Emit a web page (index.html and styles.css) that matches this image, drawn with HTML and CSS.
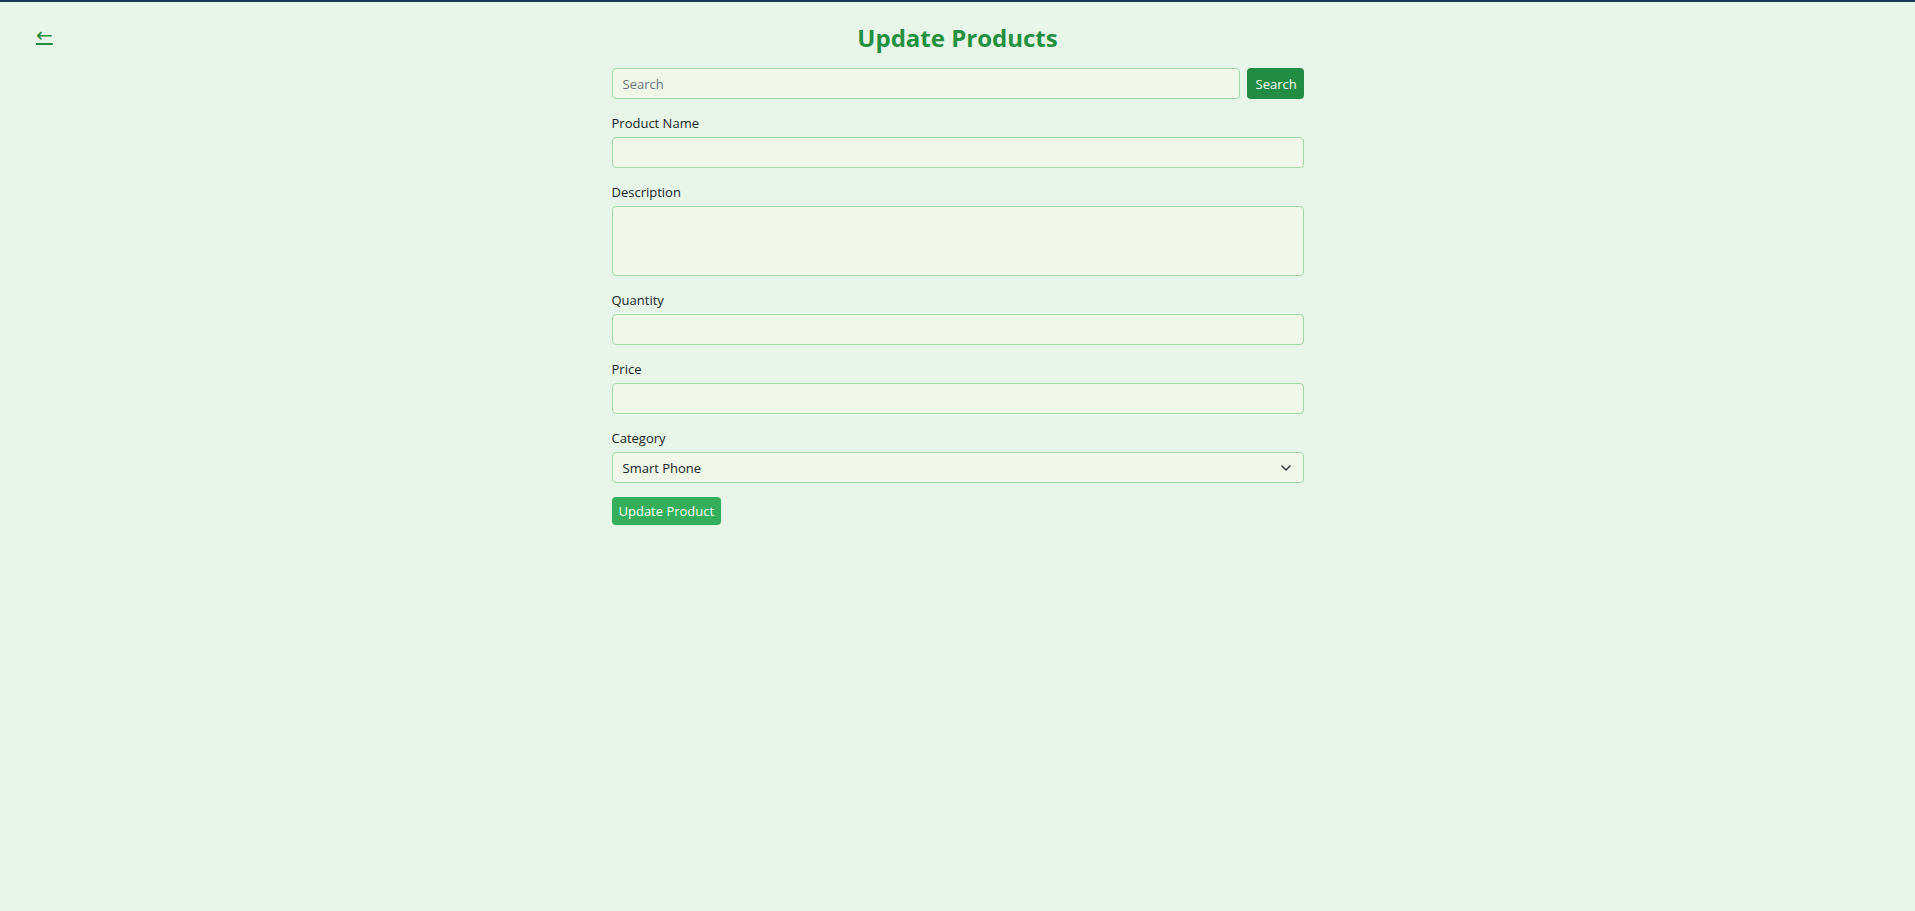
FILE: index.html
```html
<!DOCTYPE html>
<html lang="en">
<head>
<meta charset="utf-8">
<title>Update Products</title>
<link rel="stylesheet" href="styles.css">
</head>
<body>
<header class="top">
  <a class="back" href="#">&larr;</a>
  <h1 class="title">Update Products</h1>
  <span class="spacer"></span>
</header>
<main class="form-wrap">
  <div class="search-row">
    <input class="field" type="text" placeholder="Search">
    <button class="btn btn-dark" type="button">Search</button>
  </div>
  <div class="group">
    <label class="label">Product Name</label>
    <input class="field" type="text">
  </div>
  <div class="group">
    <label class="label">Description</label>
    <textarea class="field area"></textarea>
  </div>
  <div class="group">
    <label class="label">Quantity</label>
    <input class="field" type="text">
  </div>
  <div class="group">
    <label class="label">Price</label>
    <input class="field" type="text">
  </div>
  <div class="group">
    <label class="label">Category</label>
    <div class="select">
      <span class="select-text">Smart Phone</span>
      <svg class="chev" width="10" height="6" viewBox="0 0 10 6"><path d="M1 1l4 4 4-4" fill="none" stroke="#343a40" stroke-width="1.5" stroke-linecap="round" stroke-linejoin="round"/></svg>
    </div>
  </div>
  <div>
    <button class="btn btn-light" type="button">Update Product</button>
  </div>
</main>
</body>
</html>
```
FILE: styles.css
```css
* { box-sizing: border-box; }
html, body { height: 100%; }
body {
  margin: 0;
  background: #e8f5e9;
  border-top: 2px solid #1b3a57;
  font-family: "Open Sans", "Noto Sans", sans-serif;
  color: #212529;
}
.top {
  display: grid;
  grid-template-columns: 1fr auto 1fr;
  align-items: start;
  padding: 0 36px;
}
.back {
  color: #1e8e3e;
  font-size: 20px;
  line-height: 1;
  margin-top: 23px;
  justify-self: start;
  font-family: "DejaVu Sans", sans-serif;
}
.title {
  margin: 19px 0 0;
  font-size: 24px;
  line-height: 33px;
  font-weight: 700;
  color: #22903f;
}
.form-wrap {
  width: 692px;
  margin: 14px auto 0;
}
.search-row {
  display: flex;
  gap: 7px;
  margin-bottom: 14px;
}
.search-row .field { flex: 1; }
.group { margin-bottom: 14px; display: flex; flex-direction: column; }
.label {
  font-size: 13px;
  line-height: 20px;
  margin-bottom: 4px;
}
.field {
  height: 31px;
  width: 100%;
  padding: 4px 10px;
  border: 1px solid #a3d9a9;
  border-radius: 4px;
  background: #f1f8e9;
  font-family: inherit;
  font-size: 13px;
  color: #212529;
  outline: none;
}
.field::placeholder { color: #6c757d; }
.area { height: 70px; resize: none; }
.select {
  height: 31px;
  display: flex;
  align-items: center;
  justify-content: space-between;
  padding: 0 12px 0 10px;
  border: 1px solid #a3d9a9;
  border-radius: 4px;
  background: #f1f8e9;
  font-size: 13px;
}
.btn {
  border: 0;
  border-radius: 4px;
  color: #fff;
  font-family: inherit;
  font-size: 13px;
  padding: 0 9px;
}
.btn-dark { background: #228c44; height: 31px; width: 57px; }
.btn-light { background: #34ae5a; height: 28px; padding: 0 7px; }
```
